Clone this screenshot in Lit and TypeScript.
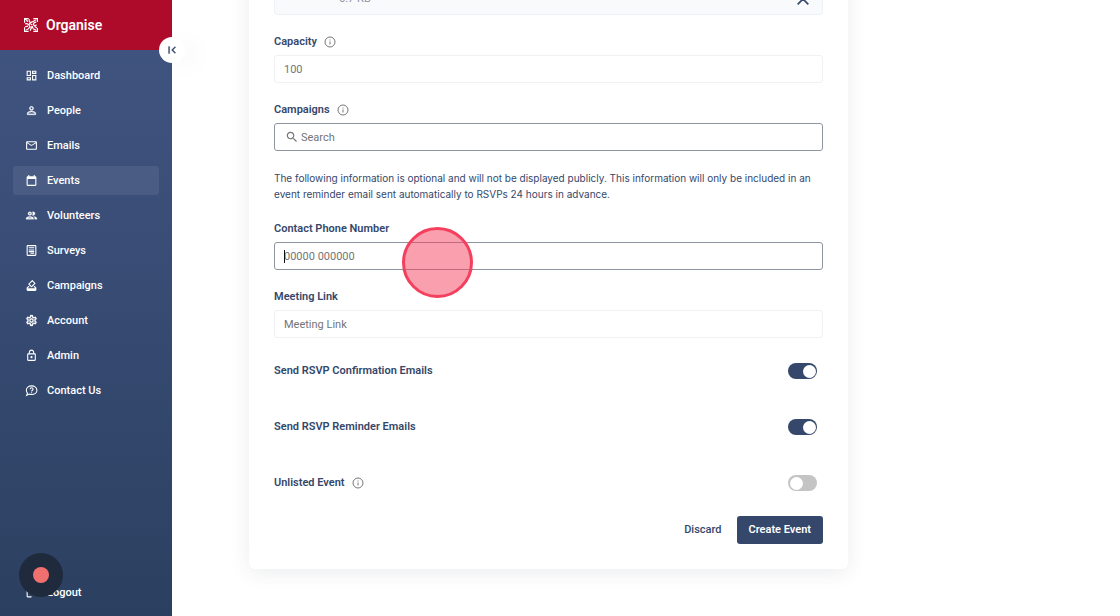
import { LitElement, html, css, svg, nothing } from "lit";
import { customElement, property } from "lit/decorators.js";
import { classMap } from "lit/directives/class-map.js";

const ICONS: Record<string, unknown> = {
  dashboard: svg`<path d="M19 5v2h-4V5h4M9 5v6H5V5h4m10 8v6h-4v-6h4M9 17v2H5v-2h4M21 3h-8v6h8V3zM11 3H3v10h8V3zm10 8h-8v10h8V11zm-10 4H3v6h8v-6z"/>`,
  person: svg`<path d="M12 5.9c1.16 0 2.1.94 2.1 2.1s-.94 2.1-2.1 2.1S9.9 9.16 9.9 8s.94-2.1 2.1-2.1m0 9c2.97 0 6.1 1.46 6.1 2.1v1.1H5.9V17c0-.64 3.13-2.1 6.1-2.1M12 4C9.79 4 8 5.79 8 8s1.79 4 4 4 4-1.79 4-4-1.79-4-4-4zm0 9c-2.67 0-8 1.34-8 4v3h16v-3c0-2.66-5.33-4-8-4z" stroke="currentColor" stroke-width=".5"/>`,
  mail: svg`<path d="M22 6c0-1.1-.9-2-2-2H4c-1.1 0-2 .9-2 2v12c0 1.1.9 2 2 2h16c1.1 0 2-.9 2-2V6zm-2 0l-8 5-8-5h16zm0 12H4V8l8 5 8-5v10z"/>`,
  calendar: svg`<path d="M19 4h-1V2h-2v2H8V2H6v2H5c-1.11 0-1.99.9-1.99 2L3 20c0 1.1.89 2 2 2h14c1.1 0 2-.9 2-2V6c0-1.1-.9-2-2-2zm0 16H5V9h14v11z"/>`,
  group: svg`<path d="M9 13.75c-2.34 0-7 1.17-7 3.5V19h14v-1.75c0-2.33-4.66-3.5-7-3.5zM4.34 17c.84-.58 2.87-1.25 4.66-1.25s3.82.67 4.66 1.25H4.34zM9 12c1.93 0 3.5-1.57 3.5-3.5S10.93 5 9 5 5.5 6.57 5.5 8.5 7.07 12 9 12zm0-5c.83 0 1.5.67 1.5 1.5S9.83 10 9 10s-1.5-.67-1.5-1.5S8.17 7 9 7zm7.04 6.81c1.16.84 1.96 1.96 1.96 3.44V19h4v-1.75c0-2.02-3.5-3.17-5.96-3.44zM15 12c1.93 0 3.5-1.57 3.5-3.5S16.93 5 15 5c-.54 0-1.04.13-1.5.35.63.89 1 1.98 1 3.15s-.37 2.26-1 3.15c.46.22.96.35 1.5.35z" stroke="currentColor" stroke-width=".5"/>`,
  survey: svg`<path fill-rule="evenodd" d="M5 2h14c1.1 0 2 .9 2 2v16c0 1.1-.9 2-2 2H5c-1.1 0-2-.9-2-2V4c0-1.1.9-2 2-2zm0 2v16h14V4H5zm2 2h10v2H7V6zm0 4h10v2H7v-2zm0 3h10v2H7v-2zm3 3h7v2h-7v-2z"/>`,
  vote: svg`<path d="M18 13h-.68l-2 2h1.91L19 17H5l1.78-2h2.05l-2-2H6l-3 3v4c0 1.1.89 2 1.99 2H19c1.1 0 2-.89 2-2v-4l-3-3zm-6.66 2.02c.39.39 1.02.39 1.41 0l6.36-6.36c.39-.39.39-1.02 0-1.41L14.16 2.3c-.38-.4-1.01-.4-1.4-.01L6.39 8.66c-.39.39-.39 1.02 0 1.41l4.95 4.95zm2.12-10.61L17 7.95l-4.95 4.95-3.54-3.54 4.95-4.95z"/>`,
  settings: svg`<path d="M19.43 12.98c.04-.32.07-.64.07-.98 0-.34-.03-.66-.07-.98l2.11-1.65c.19-.15.24-.42.12-.64l-2-3.46c-.09-.16-.26-.25-.44-.25-.06 0-.12.01-.17.03l-2.49 1c-.52-.4-1.08-.73-1.69-.98l-.38-2.65C14.46 2.18 14.25 2 14 2h-4c-.25 0-.46.18-.49.42l-.38 2.65c-.61.25-1.17.59-1.69.98l-2.49-1c-.06-.02-.12-.03-.18-.03-.17 0-.34.09-.43.25l-2 3.46c-.13.22-.07.49.12.64l2.11 1.65c-.04.32-.07.65-.07.98 0 .33.03.66.07.98l-2.11 1.65c-.19.15-.24.42-.12.64l2 3.46c.09.16.26.25.44.25.06 0 .12-.01.17-.03l2.49-1c.52.4 1.08.73 1.69.98l.38 2.65c.03.24.24.42.49.42h4c.25 0 .46-.18.49-.42l.38-2.65c.61-.25 1.17-.59 1.69-.98l2.49 1c.06.02.12.03.18.03.17 0 .34-.09.43-.25l2-3.46c.12-.22.07-.49-.12-.64l-2.11-1.65zm-1.98-1.71c.04.31.05.52.05.73 0 .21-.02.43-.05.73l-.14 1.13.89.7 1.08.84-.7 1.21-1.27-.51-1.04-.42-.9.68c-.43.32-.84.56-1.25.73l-1.06.43-.16 1.13-.2 1.35h-1.4l-.19-1.35-.16-1.13-1.06-.43c-.43-.18-.83-.41-1.23-.71l-.91-.7-1.06.43-1.27.51-.7-1.21 1.08-.84.89-.7-.14-1.13c-.03-.31-.05-.54-.05-.74s.02-.43.05-.73l.14-1.13-.89-.7-1.08-.84.7-1.21 1.27.51 1.04.42.9-.68c.43-.32.84-.56 1.25-.73l1.06-.43.16-1.13.2-1.35h1.39l.19 1.35.16 1.13 1.06.43c.43.18.83.41 1.23.71l.91.7 1.06-.43 1.27-.51.7 1.21-1.07.85-.89.7.14 1.13zM12 8c-2.21 0-4 1.79-4 4s1.79 4 4 4 4-1.79 4-4-1.79-4-4-4zm0 6c-1.1 0-2-.9-2-2s.9-2 2-2 2 .9 2 2-.9 2-2 2z" stroke="currentColor" stroke-width=".5"/>`,
  lock: svg`<path d="M18 8h-1V6c0-2.76-2.24-5-5-5S7 3.24 7 6v2H6c-1.1 0-2 .9-2 2v10c0 1.1.9 2 2 2h12c1.1 0 2-.9 2-2V10c0-1.1-.9-2-2-2zM9 6c0-1.66 1.34-3 3-3s3 1.34 3 3v2H9V6zm9 14H6V10h12v10zm-6-3c1.1 0 2-.9 2-2s-.9-2-2-2-2 .9-2 2 .9 2 2 2z"/>`,
  help: svg`<g fill="none" stroke="currentColor" stroke-width="2"><path d="M3 21l1.600-4.300C2.900 15.200 2.500 13.200 2.500 11.500 2.500 7 6.800 3.500 12.200 3.500S22 7 22 11.500s-4.300 8-9.800 8c-1.700 0-3.200-.3-4.600-.9L3 21z"/><path d="M9.500 9.500c0-3.300 5.400-3.300 5.400 0 0 2-2.700 2.200-2.700 4.500M12.200 15.200v2"/></g>`,
  logout: svg`<path d="M5 3h7v2H5v14h7v2H5c-1.100 0-2-.9-2-2V5c0-1.100.9-2 2-2zm11 4l5 5-5 5-1.400-1.400L17.200 13H8v-2h9.200l-2.600-2.600L16 7z"/>`,
  search: svg`<path d="M15.500 14h-.79l-.28-.27C15.410 12.590 16 11.110 16 9.500 16 5.910 13.090 3 9.500 3S3 5.910 3 9.500 5.910 16 9.500 16c1.610 0 3.090-.59 4.230-1.570l.27.28v.79l5 4.990L20.490 19l-4.990-5zm-6 0C7.010 14 5 11.990 5 9.500S7.010 5 9.500 5 14 7.010 14 9.500 11.990 14 9.500 14z"/>`,
  collapse: svg`<path d="M18.410 16.590L13.820 12l4.590-4.590L17 6l-6 6 6 6zM6 6h2v12H6z" stroke="currentColor" stroke-width=".5"/>`,
  close: svg`<path d="M4 4l16 16M20 4L4 20" fill="none" stroke="currentColor" stroke-width="2.500"/>`,
  info: svg`<g fill="none" stroke="currentColor" stroke-width="2"><circle cx="12" cy="12" r="10"/><path d="M12 11v6M12 7v2"/></g>`,
  logo: svg`<g fill="none" stroke="currentColor" stroke-width="2"><path d="M1 8V1h7M16 1h7v6M23 17v6h-7M8 23H1v-7"/><path d="M2 2c3 1 4 3 4 5M9 2c-1 4 1 6 4 5s5-3 8-4M21 7c-4 0-5 2-5 4s3 2 6 1M13 7c-3 1-5 3-4 6s4 3 6 1M2 10c3-1 5 0 6 2M3 21c4-1 6-3 7-6M2 15l5-1M11 22c0-4 2-6 5-6M15 18l6 3M18 14l4 3M11 10l3 2"/></g>`,
};

@customElement("ui-icon")
export class UiIcon extends LitElement {
  static styles = css`
    :host { display: inline-flex; flex: none; width: 13px; height: 13px; }
    svg { width: 100%; height: 100%; fill: currentColor; }
  `;
  @property() name = "";
  render() {
    return html`<svg viewBox="0 0 24 24" aria-hidden="true">${ICONS[this.name]}</svg>`;
  }
}

const NAV = [
  ["Dashboard", "dashboard"],
  ["People", "person"],
  ["Emails", "mail"],
  ["Events", "calendar"],
  ["Volunteers", "group"],
  ["Surveys", "survey"],
  ["Campaigns", "vote"],
  ["Account", "settings"],
  ["Admin", "lock"],
  ["Contact Us", "help"],
];

@customElement("app-root")
export class AppRoot extends LitElement {
  static styles = css`
    * { box-sizing: border-box; }
    :host {
      display: flex;
      position: relative;
      height: 100vh;
      overflow: hidden;
      background: #fff;
      color: #35476a;
      font: 400 11px/16px Roboto, "Liberation Sans", sans-serif;
    }
    button, input { font: inherit; color: inherit; }
    button { border: 0; background: none; padding: 0; cursor: pointer; }

    .sidebar {
      position: relative;
      display: flex;
      flex-direction: column;
      flex: none;
      width: 172px;
      color: #fff;
      background: linear-gradient(#405580, #3a4e78 35%, #2b4060);
    }
    .brand {
      display: flex;
      align-items: center;
      gap: 8px;
      height: 50px;
      padding-left: 24px;
      background: #ae0a2a;
      font-size: 14px;
      font-weight: 600;
    }
    .brand ui-icon { width: 14px; height: 14px; }
    .collapse {
      position: absolute;
      top: 37px;
      right: -13px;
      display: grid;
      place-items: center;
      width: 26px;
      height: 26px;
      border-radius: 50%;
      background: #fff;
      color: #35476a;
      box-shadow: 12px 4px 24px rgb(40 50 80 / 3%);
    }
    .collapse ui-icon { width: 14px; height: 14px; }
    nav {
      display: flex;
      flex-direction: column;
      flex: 1;
      gap: 6px;
      padding: 11px 13px 9px;
    }
    .link {
      display: flex;
      align-items: center;
      gap: 9px;
      height: 29px;
      padding-left: 12px;
      border-radius: 3px;
      color: #fff;
      font-weight: 500;
      text-decoration: none;
    }
    .link.active { background: rgb(255 255 255 / 8%); }
    .link.last { margin-top: auto; }

    main { flex: 1; min-width: 0; padding: 0 25px 0 77px; }
    .card {
      display: flex;
      flex-direction: column;
      gap: 19px;
      max-width: 599px;
      margin-top: -67px;
      padding: 25px;
      border-radius: 6px;
      background: #fff;
      box-shadow: 0 4px 20px rgb(40 50 80 / 9%);
    }
    .file {
      display: flex;
      justify-content: space-between;
      align-items: flex-end;
      height: 57px;
      padding: 0 11px 7px 64px;
      border: 1px solid #eef1f5;
      border-radius: 3px;
      background: #f9fafc;
      color: #8a93a3;
    }
    .remove { display: flex; height: 16px; align-items: center; color: #35476a; }
    .remove ui-icon { width: 16px; height: 16px; }
    .field { display: flex; flex-direction: column; gap: 5px; }
    .title { display: flex; align-items: center; gap: 7px; font-weight: 600; }
    .title ui-icon { width: 12px; height: 12px; color: #777; }
    .box {
      position: relative;
      display: flex;
      align-items: center;
      gap: 2px;
      height: 28px;
      padding-left: 9px;
      border: 1px solid #f0f1f4;
      border-radius: 3px;
      color: #757575;
    }
    .box ui-icon { width: 14px; height: 14px; }
    .box.strong { border-color: #8e959f; }
    .box.search { padding-left: 10px; }
    .box input {
      flex: 1;
      min-width: 0;
      height: 100%;
      padding: 0;
      border: 0;
      outline: 0;
      background: none;
    }
    .box input::placeholder { color: #757575; opacity: 1; }
    .caret {
      position: absolute;
      top: 7px;
      left: 9px;
      width: 1px;
      height: 13px;
      background: #111;
    }
    .note { margin: 0; font-family: Inter, "Liberation Sans", sans-serif; font-size: 10px; }
    .switches {
      display: flex;
      flex-direction: column;
      gap: 40px;
      padding: 6px 6px 6px 0;
    }
    .row { display: flex; justify-content: space-between; align-items: center; }
    .switch {
      appearance: none;
      display: flex;
      align-items: center;
      width: 29px;
      height: 16px;
      margin: 0;
      padding: 0 2px;
      border-radius: 8px;
      background: #c4c4c4;
    }
    .switch::before {
      content: "";
      width: 13px;
      height: 13px;
      border-radius: 50%;
      background: #fff;
    }
    .switch:checked { justify-content: flex-end; padding: 0 1px; background: #35476a; }
    .actions { display: flex; justify-content: flex-end; gap: 15px; font-weight: 500; }
    .primary {
      height: 28px;
      padding: 0 12px;
      border-radius: 3px;
      background: #35476a;
      color: #fff;
      font-weight: 600;
    }

    .pointer {
      position: absolute;
      left: 402px;
      top: 227px;
      width: 71px;
      height: 71px;
      border: 3px solid #f43f5e;
      border-radius: 50%;
      background: rgb(244 63 94 / 50%);
      pointer-events: none;
    }
    .recorder {
      position: absolute;
      left: 19px;
      bottom: 19px;
      display: grid;
      place-items: center;
      width: 44px;
      height: 44px;
      border-radius: 50%;
      background: #1f2a3c;
    }
    .dot { width: 16px; height: 16px; border-radius: 50%; background: #f07070; }
  `;

  private field(id: string, label: string, placeholder: string, o: { info?: boolean; search?: boolean; focus?: boolean } = {}) {
    return html`<div class="field">
      <label class="title" for=${id}>${label}${o.info ? html`<ui-icon name="info"></ui-icon>` : nothing}</label>
      <div class=${classMap({ box: true, strong: !!(o.search || o.focus), search: !!o.search })}>
        ${o.search ? html`<ui-icon name="search"></ui-icon>` : nothing}
        <input id=${id} type="text" placeholder=${placeholder} />
        ${o.focus ? html`<span class="caret"></span>` : nothing}
      </div>
    </div>`;
  }

  private toggle(id: string, label: string, on: boolean, info = false) {
    return html`<div class="row">
      <label class="title" for=${id}>${label}${info ? html`<ui-icon name="info"></ui-icon>` : nothing}</label>
      <input class="switch" id=${id} type="checkbox" role="switch" .checked=${on} />
    </div>`;
  }

  render() {
    return html`
      <aside class="sidebar">
        <div class="brand"><ui-icon name="logo"></ui-icon>Organise</div>
        <nav>
          ${NAV.map(
            ([label, icon]) => html`<a href="#" class=${classMap({ link: true, active: label === "Events" })}
              ><ui-icon name=${icon}></ui-icon>${label}</a>`
          )}
          <a href="#" class="link last"><ui-icon name="logout"></ui-icon>Logout</a>
        </nav>
        <button class="collapse" aria-label="Collapse menu"><ui-icon name="collapse"></ui-icon></button>
      </aside>
      <main>
        <form class="card">
          <div class="file">
            <span>6.7 KB</span>
            <button class="remove" type="button" aria-label="Remove file"><ui-icon name="close"></ui-icon></button>
          </div>
          ${this.field("capacity", "Capacity", "100", { info: true })}
          ${this.field("campaigns", "Campaigns", "Search", { info: true, search: true })}
          <p class="note">The following information is optional and will not be displayed publicly. This information will only be included in an event reminder email sent automatically to RSVPs 24 hours in advance.</p>
          ${this.field("phone", "Contact Phone Number", "00000 000000", { focus: true })}
          ${this.field("link", "Meeting Link", "Meeting Link")}
          <div class="switches">
            ${this.toggle("confirm", "Send RSVP Confirmation Emails", true)}
            ${this.toggle("remind", "Send RSVP Reminder Emails", true)}
            ${this.toggle("unlisted", "Unlisted Event", false, true)}
          </div>
          <div class="actions">
            <button type="button">Discard</button>
            <button type="button" class="primary">Create Event</button>
          </div>
        </form>
      </main>
      <div class="pointer"></div>
      <button class="recorder" aria-label="Stop recording"><span class="dot"></span></button>
    `;
  }
}
